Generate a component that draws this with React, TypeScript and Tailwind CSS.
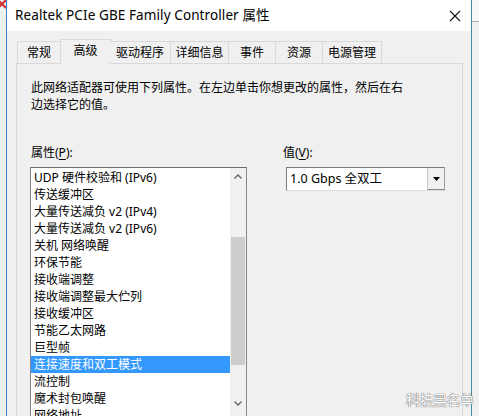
const tabs = [
  { label: '常规', w: 'w-[44px]' },
  { label: '高级', w: 'w-[51px]', active: true },
  { label: '驱动程序', w: 'w-[61px]' },
  { label: '详细信息', w: 'w-[58px]' },
  { label: '事件', w: 'w-[47px]' },
  { label: '资源', w: 'w-[47px]' },
  { label: '电源管理', w: 'w-[59px]' },
]

const items = [
  'UDP 硬件校验和 (IPv6)',
  '传送缓冲区',
  '大量传送减负 v2 (IPv4)',
  '大量传送减负 v2 (IPv6)',
  '关机 网络唤醒',
  '环保节能',
  '接收端调整',
  '接收端调整最大伫列',
  '接收缓冲区',
  '节能乙太网路',
  '巨型帧',
  '连接速度和双工模式',
  '流控制',
  '魔术封包唤醒',
  '网络地址',
]

const font = { fontFamily: '"Noto Sans", "Noto Sans CJK SC", sans-serif' }

export default function App() {
  return (
    <div
      className="relative flex w-[479px] h-[416px] overflow-hidden bg-[#f0f0f0] text-[12px] text-black"
      style={font}
    >
      {/* window behind, left edge */}
      <div className="relative w-[7px] shrink-0 bg-[#eef1f3] border-r border-[#3b7fc4]">
        <svg className="absolute left-0 top-0" width="6" height="10" viewBox="0 0 6 10">
          <path d="M-2 0 L6 8 M6 0 L-2 8" stroke="#d0312d" strokeWidth="2" fill="none" />
        </svg>
      </div>

      {/* dialog */}
      <div className="flex flex-col w-[465px] shrink-0 min-h-0 border-r border-[#3d8ca4]">
        {/* title bar */}
        <div className="flex items-center shrink-0 h-[31px] bg-white pl-[8px] pr-[10px]">
          <span className="text-[13.5px] tracking-[0.1px]">Realtek PCIe GBE Family Controller 属性</span>
          <svg className="ml-auto" width="12" height="12" viewBox="0 0 12 12">
            <path d="M1 1 L11 11 M11 1 L1 11" stroke="#111" strokeWidth="1.1" fill="none" />
          </svg>
        </div>

        {/* body */}
        <div className="flex-1 min-h-0 overflow-hidden flex flex-col bg-[#f0f0f0] pl-[9px] pr-[8px] pt-[7px]">
          {/* tab strip */}
          <div className="flex shrink-0 items-end h-[25px] pl-[1px] relative z-10">
            {tabs.map((t) =>
              t.active ? (
                <div
                  key={t.label}
                  className={`${t.w} h-[25px] -mb-[1px] -mx-[1px] flex items-center justify-center pb-[3px] bg-[#f0f0f0] border border-b-0 border-[#d9d9d9]`}
                >
                  {t.label}
                </div>
              ) : (
                <div
                  key={t.label}
                  className={`${t.w} h-[22px] flex items-center justify-center bg-[#f0f0f0] border border-l-0 first:border-l border-b-0 border-[#d9d9d9]`}
                >
                  {t.label}
                </div>
              )
            )}
          </div>

          {/* panel */}
          <div className="flex-1 shrink-0 border border-[#d9d9d9] border-b-0 bg-[#f0f0f0] pl-[14px] pr-[16px] pt-[15px]">
            <p className="leading-[17px]">
              此网络适配器可使用下列属性。在左边单击你想更改的属性，然后在右
              <br />
              边选择它的值。
            </p>

            <div className="flex mt-[31px]">
              {/* left column */}
              <div className="flex flex-col w-[217px] -ml-[1px]">
                <div className="leading-[17px] pl-[1px]">
                  属性(<span className="underline underline-offset-2">P</span>):
                </div>
                <div className="mt-[6px] h-[250px] flex border border-[#828790] border-t-[#6f6f6f] bg-white">
                  <div className="flex-1 pt-[1px] overflow-hidden">
                    {items.map((it, i) => (
                      <div
                        key={it}
                        className={`h-[17px] leading-[17px] pl-[3px] whitespace-nowrap ${
                          i === 11 ? 'bg-[#3399ff] text-white' : ''
                        }`}
                      >
                        {it}
                      </div>
                    ))}
                  </div>
                  {/* scrollbar */}
                  <div className="w-[16px] flex flex-col bg-[#f0f0f0]">
                    <div className="h-[17px] shrink-0 flex items-center justify-center">
                      <svg width="8" height="5" viewBox="0 0 8 5">
                        <path d="M0.5 4.5 L4 1 L7.5 4.5" stroke="#606060" strokeWidth="1.3" fill="none" />
                      </svg>
                    </div>
                    <div className="h-[52px] shrink-0" />
                    <div className="h-[128px] shrink-0 mx-[1px] bg-[#cdcdcd]" />
                    <div className="flex-1" />
                    <div className="h-[17px] shrink-0 flex items-start pt-[2px] justify-center">
                      <svg width="8" height="5" viewBox="0 0 8 5">
                        <path d="M0.5 0.5 L4 4 L7.5 0.5" stroke="#606060" strokeWidth="1.3" fill="none" />
                      </svg>
                    </div>
                  </div>
                </div>
              </div>

              {/* right column */}
              <div className="flex flex-col ml-[36px]">
                <div className="leading-[17px]">
                  值(<span className="underline underline-offset-2">V</span>):
                </div>
                <div className="mt-[6px] ml-[3px] w-[159px] h-[24px] flex border border-[#7a7a7a] border-r-[#a0a0a0] border-b-[#dcdcdc] bg-white">
                  <div className="flex-1 flex items-center pl-[3px] text-[12.5px]">1.0 Gbps 全双工</div>
                  <div className="w-[17px] flex items-center justify-center bg-[#f0f0f0] border-l border-[#c8c8c8] border-b border-b-[#8a8a8a]">
                    <svg width="7" height="4" viewBox="0 0 7 4">
                      <path d="M0 0 L7 0 L3.5 4 Z" fill="#000" />
                    </svg>
                  </div>
                </div>
              </div>
            </div>
          </div>
        </div>
      </div>

      {/* window behind, right edge */}
      <div className="flex-1 flex flex-col bg-[#f0f0f0]">
        <div className="h-[22px] border-b border-[#b0b0b0] bg-[#f7f7f7]" />
      </div>

      {/* watermark */}
      <div
        className="absolute left-[406px] top-[391px] whitespace-nowrap text-[14px] leading-[18px] text-white tracking-[-0.5px]"
        style={{ textShadow: '0 0 1px #555, 0 0 1px #555' }}
      >
        科技黑名单
      </div>
    </div>
  )
}
